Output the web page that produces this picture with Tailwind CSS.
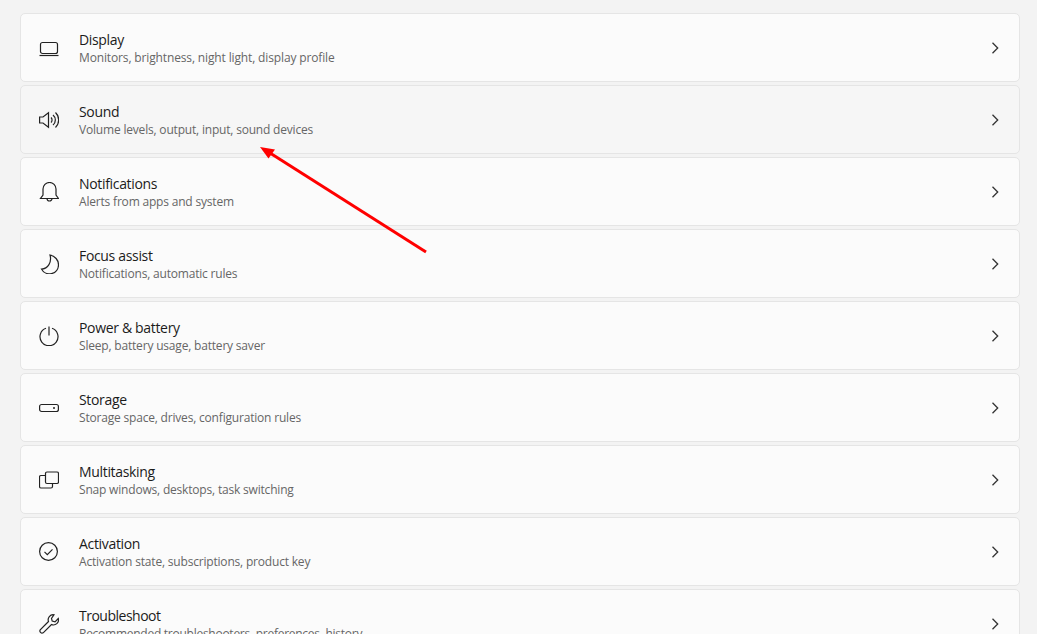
<!DOCTYPE html>
<html lang="en-us">
<head>
	<meta charset="utf-8">
	<title>System settings</title>
	<script src="https://cdn.jsdelivr.net/npm/@tailwindcss/browser@4"></script>
</head>
<body class="bg-[#f3f3f3] font-['Open_Sans','Noto_Sans',sans-serif]">
	<div class="relative h-[634px] w-[1037px] overflow-hidden pt-[13px] pl-[20px]">
		<div class="flex w-[1000px] flex-col gap-[3px]">

			<a class="flex h-[69px] shrink-0 items-center rounded-[5px] border border-[#e5e5e5] bg-[#fbfbfb]">
				<svg class="ml-[18px] h-5 w-5 shrink-0 text-[#222]" viewBox="0 0 20 20" fill="none" stroke="currentColor" stroke-width="1.2"><rect x="1.500" y="4.500" width="17" height="11" rx="2"/><path d="M.5 17.500h19"/></svg>
				<div class="ml-[20px] flex-1">
					<div class="text-[14px] leading-[19px] tracking-[-0.33px] text-[#1b1b1b]">Display</div>
					<div class="mt-px text-[12px] leading-[16px] tracking-[-0.14px] text-[#666]">Monitors, brightness, night light, display profile</div>
				</div>
				<svg class="mr-[18px] h-3 w-3 text-[#333]" viewBox="0 0 12 12" fill="none" stroke="currentColor" stroke-width="1.3"><path d="M3.5 .8 8.7 6l-5.2 5.2"/></svg>
			</a>

			<a class="flex h-[69px] shrink-0 items-center rounded-[5px] border border-[#e5e5e5] bg-[#f6f6f6]">
				<svg class="ml-[18px] h-5 w-5 shrink-0 text-[#222]" viewBox="0 0 20 20" fill="none" stroke="currentColor" stroke-width="1.2"><path d="M.6 7h3.400L9.500 2.800v14.400L4 13H.6z"/><path d="M12 7.500a3.500 3.500 0 0 1 0 5"/><path d="M14 5a6.500 6.500 0 0 1 0 10"/><path d="M16.500 2.500a10.500 10.500 0 0 1 0 15"/></svg>
				<div class="ml-[20px] flex-1">
					<div class="text-[14px] leading-[19px] tracking-[-0.33px] text-[#1b1b1b]">Sound</div>
					<div class="mt-px text-[12px] leading-[16px] tracking-[-0.19px] text-[#666]">Volume levels, output, input, sound devices</div>
				</div>
				<svg class="mr-[18px] h-3 w-3 text-[#333]" viewBox="0 0 12 12" fill="none" stroke="currentColor" stroke-width="1.3"><path d="M3.5 .8 8.7 6l-5.2 5.2"/></svg>
			</a>

			<a class="flex h-[69px] shrink-0 items-center rounded-[5px] border border-[#e5e5e5] bg-[#fbfbfb]">
				<svg class="ml-[18px] h-5 w-5 shrink-0 text-[#222]" viewBox="0 0 20 20" fill="none" stroke="currentColor" stroke-width="1.2"><path d="M4 7a6.500 6.500 0 0 1 13 0v6l2.500 3.500H1.500L4 13z"/><path d="M8 16.500a2.500 2.500 0 0 0 5 0"/></svg>
				<div class="ml-[20px] flex-1">
					<div class="text-[14px] leading-[19px] tracking-[-0.33px] text-[#1b1b1b]">Notifications</div>
					<div class="mt-px text-[12px] leading-[16px] tracking-[-0.19px] text-[#666]">Alerts from apps and system</div>
				</div>
				<svg class="mr-[18px] h-3 w-3 text-[#333]" viewBox="0 0 12 12" fill="none" stroke="currentColor" stroke-width="1.3"><path d="M3.5 .8 8.7 6l-5.2 5.2"/></svg>
			</a>

			<a class="flex h-[69px] shrink-0 items-center rounded-[5px] border border-[#e5e5e5] bg-[#fbfbfb]">
				<svg class="ml-[18px] h-5 w-5 shrink-0 text-[#222]" viewBox="0 0 20 20" fill="none" stroke="currentColor" stroke-width="1.2"><path d="M11 1C16 2 19.500 6 19.500 11A9 9 0 0 1 2.500 15C9 15 13 8 11 1z"/></svg>
				<div class="ml-[20px] flex-1">
					<div class="text-[14px] leading-[19px] tracking-[-0.33px] text-[#1b1b1b]">Focus assist</div>
					<div class="mt-px text-[12px] leading-[16px] tracking-[-0.19px] text-[#666]">Notifications, automatic rules</div>
				</div>
				<svg class="mr-[18px] h-3 w-3 text-[#333]" viewBox="0 0 12 12" fill="none" stroke="currentColor" stroke-width="1.3"><path d="M3.5 .8 8.7 6l-5.2 5.2"/></svg>
			</a>

			<a class="flex h-[69px] shrink-0 items-center rounded-[5px] border border-[#e5e5e5] bg-[#fbfbfb]">
				<svg class="ml-[18px] h-5 w-5 shrink-0 text-[#222]" viewBox="0 0 20 20" fill="none" stroke="currentColor" stroke-width="1.2"><path d="M7 2.200a9 9 0 1 0 6 0"/><path d="M10 .5v9"/></svg>
				<div class="ml-[20px] flex-1">
					<div class="text-[14px] leading-[19px] tracking-[-0.33px] text-[#1b1b1b]">Power &amp; battery</div>
					<div class="mt-px text-[12px] leading-[16px] tracking-[-0.19px] text-[#666]">Sleep, battery usage, battery saver</div>
				</div>
				<svg class="mr-[18px] h-3 w-3 text-[#333]" viewBox="0 0 12 12" fill="none" stroke="currentColor" stroke-width="1.3"><path d="M3.5 .8 8.7 6l-5.2 5.2"/></svg>
			</a>

			<a class="flex h-[69px] shrink-0 items-center rounded-[5px] border border-[#e5e5e5] bg-[#fbfbfb]">
				<svg class="ml-[18px] h-5 w-5 shrink-0 text-[#222]" viewBox="0 0 20 20" fill="none" stroke="currentColor" stroke-width="1.2"><rect x=".6" y="6.500" width="18.800" height="7" rx="2"/><circle cx="15" cy="10" r="1" fill="currentColor" stroke="none"/></svg>
				<div class="ml-[20px] flex-1">
					<div class="text-[14px] leading-[19px] tracking-[-0.33px] text-[#1b1b1b]">Storage</div>
					<div class="mt-px text-[12px] leading-[16px] tracking-[-0.19px] text-[#666]">Storage space, drives, configuration rules</div>
				</div>
				<svg class="mr-[18px] h-3 w-3 text-[#333]" viewBox="0 0 12 12" fill="none" stroke="currentColor" stroke-width="1.3"><path d="M3.5 .8 8.7 6l-5.2 5.2"/></svg>
			</a>

			<a class="flex h-[69px] shrink-0 items-center rounded-[5px] border border-[#e5e5e5] bg-[#fbfbfb]">
				<svg class="ml-[18px] h-5 w-5 shrink-0 text-[#222]" viewBox="0 0 20 20" fill="none" stroke="currentColor" stroke-width="1.2"><rect x="6.500" y="2" width="13" height="11.500" rx="1.500"/><path d="M6.500 5.500H2a1.500 1.500 0 0 0-1.500 1.500v9.500A1.500 1.500 0 0 0 2 18h10a1.500 1.500 0 0 0 1.500-1.500v-3"/></svg>
				<div class="ml-[20px] flex-1">
					<div class="text-[14px] leading-[19px] tracking-[-0.33px] text-[#1b1b1b]">Multitasking</div>
					<div class="mt-px text-[12px] leading-[16px] tracking-[-0.19px] text-[#666]">Snap windows, desktops, task switching</div>
				</div>
				<svg class="mr-[18px] h-3 w-3 text-[#333]" viewBox="0 0 12 12" fill="none" stroke="currentColor" stroke-width="1.3"><path d="M3.5 .8 8.7 6l-5.2 5.2"/></svg>
			</a>

			<a class="flex h-[69px] shrink-0 items-center rounded-[5px] border border-[#e5e5e5] bg-[#fbfbfb]">
				<svg class="ml-[18px] h-5 w-5 shrink-0 text-[#222]" viewBox="0 0 20 20" fill="none" stroke="currentColor" stroke-width="1.2"><circle cx="9.500" cy="9.500" r="8.900"/><path d="m5.500 9.800 2.800 2.800 5.200-5.200"/></svg>
				<div class="ml-[20px] flex-1">
					<div class="text-[14px] leading-[19px] tracking-[-0.33px] text-[#1b1b1b]">Activation</div>
					<div class="mt-px text-[12px] leading-[16px] tracking-[-0.19px] text-[#666]">Activation state, subscriptions, product key</div>
				</div>
				<svg class="mr-[18px] h-3 w-3 text-[#333]" viewBox="0 0 12 12" fill="none" stroke="currentColor" stroke-width="1.3"><path d="M3.5 .8 8.7 6l-5.2 5.2"/></svg>
			</a>

			<a class="flex h-[69px] shrink-0 items-center rounded-[5px] border border-[#e5e5e5] bg-[#fbfbfb]">
				<svg class="ml-[18px] h-5 w-5 shrink-0 text-[#222]" viewBox="0 0 20 20" fill="none" stroke="currentColor" stroke-width="1.2"><path d="M15 .8a5 5 0 0 0-5.500 6.700L1.200 15.800a2.200 2.200 0 0 0 3 3l8.300-8.300a5 5 0 0 0 6.800-6l-3.300 3.300-2.800-.7-.7-2.800z"/></svg>
				<div class="ml-[20px] flex-1">
					<div class="text-[14px] leading-[19px] tracking-[-0.5px] text-[#1b1b1b]">Troubleshoot</div>
					<div class="mt-px text-[12px] leading-[16px] tracking-[-0.26px] text-[#666]">Recommended troubleshooters, preferences, history</div>
				</div>
				<svg class="mr-[18px] h-3 w-3 text-[#333]" viewBox="0 0 12 12" fill="none" stroke="currentColor" stroke-width="1.3"><path d="M3.5 .8 8.7 6l-5.2 5.2"/></svg>
			</a>

		</div>
		<!-- red annotation arrow -->
		<svg class="absolute top-0 left-0 h-[634px] w-[1037px]" viewBox="0 0 1037 634" fill="none"><path d="M426 252 270 153" stroke="#ff0000" stroke-width="3"/><path d="M260 147 275 149.500 268.500 158.500z" fill="#ff0000"/></svg>
	</div>
</body>
</html>
